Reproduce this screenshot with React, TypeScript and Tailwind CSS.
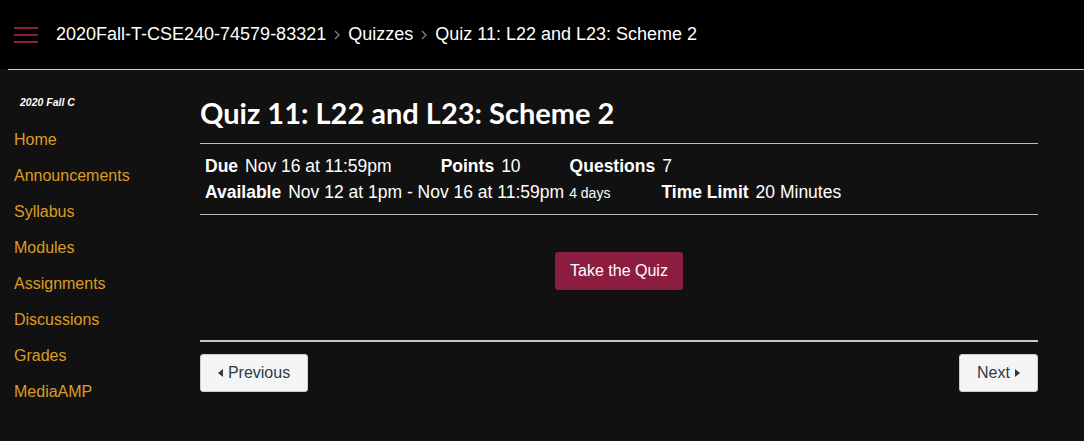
import { useState } from 'react';

// ─── Course navigation ────────────────────────────────────────
const NAV_LINKS = ['Home', 'Announcements', 'Syllabus', 'Modules', 'Assignments', 'Discussions', 'Grades', 'MediaAMP'];

const CRUMBS = ['2020Fall-T-CSE240-74579-83321', 'Quizzes', 'Quiz 11: L22 and L23: Scheme 2'];

function Chevron() {
  return (
    <svg width="6" height="10" viewBox="0 0 6 10" className="mx-[8px] mt-[2px]">
      <path d="M1 1l4 4-4 4" fill="none" stroke="#8a8a8a" strokeWidth="1.2" />
    </svg>
  );
}

function Header() {
  return (
    <header className="h-[69px] bg-black flex items-center">
      <button className="ml-[14px] w-[24px] flex flex-col gap-[5px]" aria-label="Menu">
        <span className="h-[2px] bg-[#8c1d40] block" />
        <span className="h-[2px] bg-[#8c1d40] block" />
        <span className="h-[2px] bg-[#8c1d40] block" />
      </button>
      <nav className="ml-[18px] flex items-center text-[18px] text-white -mt-[1px]">
        {CRUMBS.map((c, i) => (
          <div key={c} className="flex items-center">
            {i > 0 && <Chevron />}
            <span>{c}</span>
          </div>
        ))}
      </nav>
    </header>
  );
}

function Detail({ label, value, extra, className = '' }: { label: string; value: string; extra?: string; className?: string }) {
  return (
    <div className={`flex items-baseline ${className}`}>
      <span className="font-bold">{label}</span>
      <span className="ml-[7px]">{value}</span>
      {extra && <span className="ml-[5px] text-[14px]">{extra}</span>}
    </div>
  );
}

export default function App() {
  const [active] = useState(-1);

  return (
    <div className="min-h-[441px] bg-[#111111] font-['Liberation_Sans',Arial,sans-serif]">
      <Header />
      <div className="ml-2 h-px bg-[#cfcfcf]" />

      <div className="flex">
        {/* Sidebar */}
        <aside className="w-[200px] shrink-0">
          <div className="pl-[20px] pt-[26px] text-[10.5px] italic font-bold text-white leading-[12px]">2020 Fall C</div>
          <ul className="pl-[14px] mt-[14px]">
            {NAV_LINKS.map((l, i) => (
              <li key={l} className={`h-[36px] flex items-center text-[16px] ${i === active ? 'text-white' : 'text-[#dc9d20]'}`}>
                {l}
              </li>
            ))}
          </ul>
        </aside>

        {/* Main content */}
        <main className="flex-1 mr-[46px]">
          <h1 className="pt-[25px] text-[29px] leading-[36px] font-bold text-white font-['Lato',sans-serif]">
            Quiz 11: L22 and L23: Scheme 2
          </h1>
          <div className="mt-3 h-px bg-[#bdbdbd]" />

          <div className="pt-[9px] pb-[8px] px-[5px] text-[17.5px] leading-[26px] text-white">
            <div className="flex">
              <Detail label="Due" value="Nov 16 at 11:59pm" />
              <Detail label="Points" value="10" className="ml-[49px]" />
              <Detail label="Questions" value="7" className="ml-[49px]" />
            </div>
            <div className="flex">
              <Detail label="Available" value="Nov 12 at 1pm - Nov 16 at 11:59pm" extra="4 days" />
              <Detail label="Time Limit" value="20 Minutes" className="ml-[51px]" />
            </div>
          </div>
          <div className="h-px bg-[#bdbdbd]" />

          <div className="flex justify-center pt-[37px] pb-[50px]">
            <button className="h-[38px] px-[15px] rounded-[3px] bg-[#8c1d40] text-white text-[16px]">Take the Quiz</button>
          </div>

          <div className="h-[2px] bg-[#c8c8c8]" />
          <div className="flex justify-between mt-[12px]">
            <button className="h-[38px] w-[108px] flex items-center justify-center gap-[5px] bg-[#f5f5f5] border border-[#c7cdd1] rounded-[3px] text-[16px] text-[#2d3b45]">
              <svg width="5" height="8" viewBox="0 0 5 8"><path d="M5 0v8L0 4z" fill="#2d3b45" /></svg>
              Previous
            </button>
            <button className="h-[38px] w-[79px] flex items-center justify-center gap-[5px] bg-[#f5f5f5] border border-[#c7cdd1] rounded-[3px] text-[16px] text-[#2d3b45]">
              Next
              <svg width="5" height="8" viewBox="0 0 5 8"><path d="M0 0v8l5-4z" fill="#2d3b45" /></svg>
            </button>
          </div>
        </main>
      </div>
    </div>
  );
}
